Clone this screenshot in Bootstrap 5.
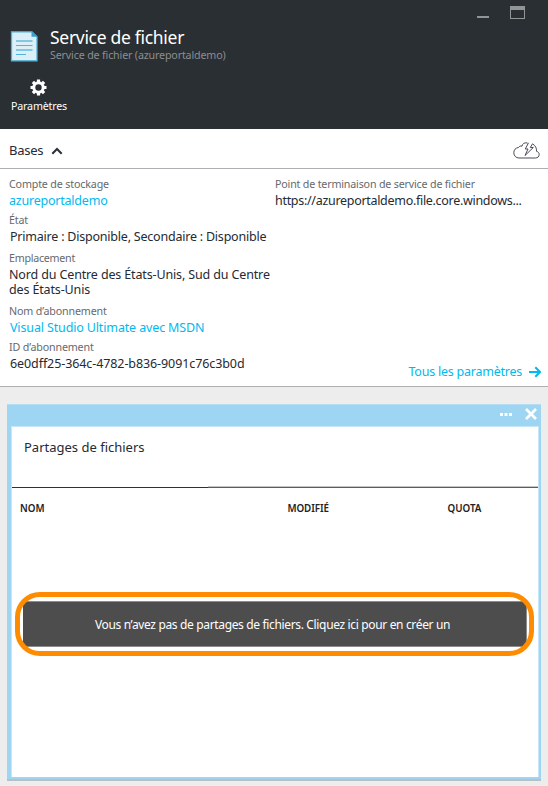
<!DOCTYPE html>
<html lang="fr">
<head>
<meta charset="utf-8">
<meta name="viewport" content="width=device-width, initial-scale=1">
<title>Service de fichier</title>
<link href="https://cdn.jsdelivr.net/npm/bootstrap@5.3.0/dist/css/bootstrap.min.css" rel="stylesheet">
<style>
body{font-family:"Noto Sans","Open Sans",sans-serif;font-size:12.5px;line-height:15px;color:#252a33;background:#ededed;width:548px;height:786px;overflow:hidden;white-space:nowrap}
svg{display:block;flex:none}
a,a:hover{color:#00b9ee;text-decoration:none}
.blade-head{background:#2a2f33;height:129px;padding:6px 23px 0 10px}
.win-tools{height:20px;gap:21px}
.doc-icon{margin-top:5px}
.blade-title{font-size:17.5px;line-height:22px;letter-spacing:-.3px;color:#fff;margin:0;font-weight:400}
.blade-sub{font-size:10.7px;line-height:15px;letter-spacing:-.163px;color:#8b8e91}
.cmd{width:58px;margin-top:16px;gap:3px;font-size:10.7px;letter-spacing:-.18px;color:#fff}
.cmd svg{margin-right:1px}
.bases{height:40px;border-bottom:1px solid #adb0b2;padding:0 8px 0 9px;font-size:13px;letter-spacing:-.28px}
.details{height:218px;border-bottom:1px solid #b0b0b0;padding:8px 7px 0 9px}
.details dl{margin:0}
.details dt{font-weight:400;font-size:10.7px;color:#66696d;letter-spacing:-.155px}
.details dd{margin:1px 0 5px;letter-spacing:-.14px}
.details dd.wide-gap{margin-bottom:7px}
.details dd.inset{padding-left:1px}
.col-left{width:266px}
.details .sp-a{letter-spacing:-.216px}
.details .sp-b{letter-spacing:-.3px}
.details .sp-c{letter-spacing:-.092px}
.details .sp-d{letter-spacing:-.264px}
.details .sp-f{letter-spacing:-.18px}
.all-settings{letter-spacing:-.234px;gap:7px;bottom:7px;right:7px}
.shares{margin:17px 7px 0;height:375px;background:#9dd5f3;padding:0 2px 2px 4px;border-top:1px solid #b4def2;box-shadow:0 2px 0 #b9bfc3}
.shares-bar{height:21px;padding:0 2px 3px 0;gap:13px}
.shares-body{height:351px;background:#fff;border:1px solid #c6e7f8;border-bottom:0}
.shares-name{height:60px;padding:11px 0 0 12px;font-size:13px;line-height:18px}
.rule{height:1px;background:#2e3138}
.rule i{width:330px;height:2px;margin-top:-1px;background:linear-gradient(#c3c5c7 50%,#5a5d62 50%)}
.heads{padding:13px 0 0 8px;font-size:9.8px;font-weight:600;color:#222}
.heads .h-nom{width:267.5px}
.heads .h-mod{width:160px;letter-spacing:-.1px}
.ring{margin:76px 4px 0 3px;height:64px;padding:9px 8px}
.ring::after{content:"";position:absolute;inset:0;border:5px solid #ff8c00;border-radius:25px;pointer-events:none}
.make{width:504px;height:46px;background:#4d4d4d;border:1px solid #8c8c8c;border-left:0;border-radius:4px;color:#fff;font-size:12px;letter-spacing:-.345px;padding:1px 4px 0 0;line-height:43px}
</style>
</head>
<body>
<header class="blade-head">
  <div class="win-tools d-flex justify-content-end align-items-start">
    <svg width="12" height="13"><path d="M0 10h12v2H0z" fill="#919595"/></svg>
    <svg width="15" height="13"><path d="M0 0h15v13H0zM1 4v8h13V4z" fill="#919595" fill-rule="evenodd"/></svg>
  </div>
  <div class="d-flex">
    <svg class="doc-icon" width="28" height="32" viewBox="0 0 28 32"><path d="M1.500 .8H22l5 5v24H1.500z" fill="#dceff7" stroke="#4fb3dc" stroke-width="1.300"/><path d="M21.500 .2l6 5.500h-6z" fill="#3a9fcb"/><path d="M6 10h16.500M6 19h16.500" stroke="#82c8e6" stroke-width="1.800"/><path d="M6 14.500h16.500M6 23.500h10" stroke="#52b4dc" stroke-width="1.100"/></svg>
    <div class="ms-2 ps-1">
      <h1 class="blade-title">Service de fichier</h1>
      <div class="blade-sub">Service de fichier (azureportaldemo)</div>
    </div>
  </div>
  <div class="cmd d-flex flex-column align-items-center">
    <svg width="17" height="17" viewBox="-8.500 -8.500 17 17" fill="none" stroke="#fff"><circle r="4.700" stroke-width="3"/><path stroke-width="3.200" d="M0-8V-5M0 8V5M-8 0H-5M8 0H5M-5.600-5.600L-4-4M5.600-5.600L4-4M-5.600 5.600L-4 4M5.600 5.600L4 4"/></svg>
    <span>Paramètres</span>
  </div>
</header>
<main>
  <section class="bg-white">
    <div class="bases d-flex align-items-center">
      <span class="pt-1">Bases</span>
      <svg class="ms-2 mt-1 me-auto" width="12" height="8" viewBox="0 0 12 8"><path d="M1.300 6.800L6 2l4.700 4.800" fill="none" stroke="#2b3038" stroke-width="2"/></svg>
      <svg class="mt-1" width="27" height="18" viewBox="0 0 27 18" fill="none" stroke="#4a4d58" stroke-linejoin="round"><path d="M14.500 1C11 .2 9.300 2 9 4.200 7.500 3.600 6.300 4.200 5.500 5.500 2.500 5.800.8 8 .8 10.800.8 13.800 3 16 6 16H22.500C24.700 16 26.200 14.500 26.200 12.500 26.200 11 25.200 9.700 23.500 9.300 23.800 6.500 22.500 3.500 19.500 1.800"/><path d="M15.500 .8L12.300 7H15L12 13.500 20.300 5.500H17.300L19.500 1.800"/></svg>
    </div>
    <div class="details d-flex position-relative">
      <dl class="col-left">
        <dt>Compte de stockage</dt><dd class="sp-a"><a href="#">azureportaldemo</a></dd>
        <dt>État</dt><dd class="sp-a inset wide-gap">Primaire : Disponible, Secondaire : Disponible</dd>
        <dt class="sp-d">Emplacement</dt><dd class="wide-gap">Nord du Centre des États-Unis, Sud du Centre<br>des États-Unis</dd>
        <dt>Nom d’abonnement</dt><dd class="inset"><a href="#">Visual Studio Ultimate avec MSDN</a></dd>
        <dt>ID d’abonnement</dt><dd class="sp-c inset">6e0dff25-364c-4782-b836-9091c76c3b0d</dd>
      </dl>
      <dl>
        <dt class="sp-f">Point de terminaison de service de fichier</dt><dd class="sp-b">https://azureportaldemo.file.core.windows...</dd>
      </dl>
      <a href="#" class="all-settings d-flex align-items-center position-absolute">Tous les paramètres
        <svg width="12" height="12" viewBox="0 0 12 12" fill="none" stroke="#00b9ee" stroke-width="2"><path d="M0 6h11M6.300 1.300L11 6l-4.700 4.700"/></svg></a>
    </div>
  </section>
  <section class="shares">
    <div class="shares-bar d-flex justify-content-end align-items-center">
      <svg width="12" height="3" fill="#fff"><path d="M0 0h3v3H0zM4.500 0h3v3h-3zM9 0h3v3H9z"/></svg>
      <svg width="12" height="12" viewBox="0 0 12 12"><path d="M1 1l10 10M11 1L1 11" stroke="#fff" stroke-width="2.700"/></svg>
    </div>
    <div class="shares-body">
      <div class="shares-name">Partages de fichiers</div>
      <div class="rule d-flex justify-content-end"><i></i></div>
      <div class="heads d-flex">
        <span class="h-nom">NOM</span><span class="h-mod">MODIFIÉ</span><span>QUOTA</span>
      </div>
      <div class="ring position-relative">
        <button class="make d-block text-center">Vous n’avez pas de partages de fichiers. Cliquez ici pour en créer un</button>
      </div>
    </div>
  </section>
</main>
</body>
</html>
